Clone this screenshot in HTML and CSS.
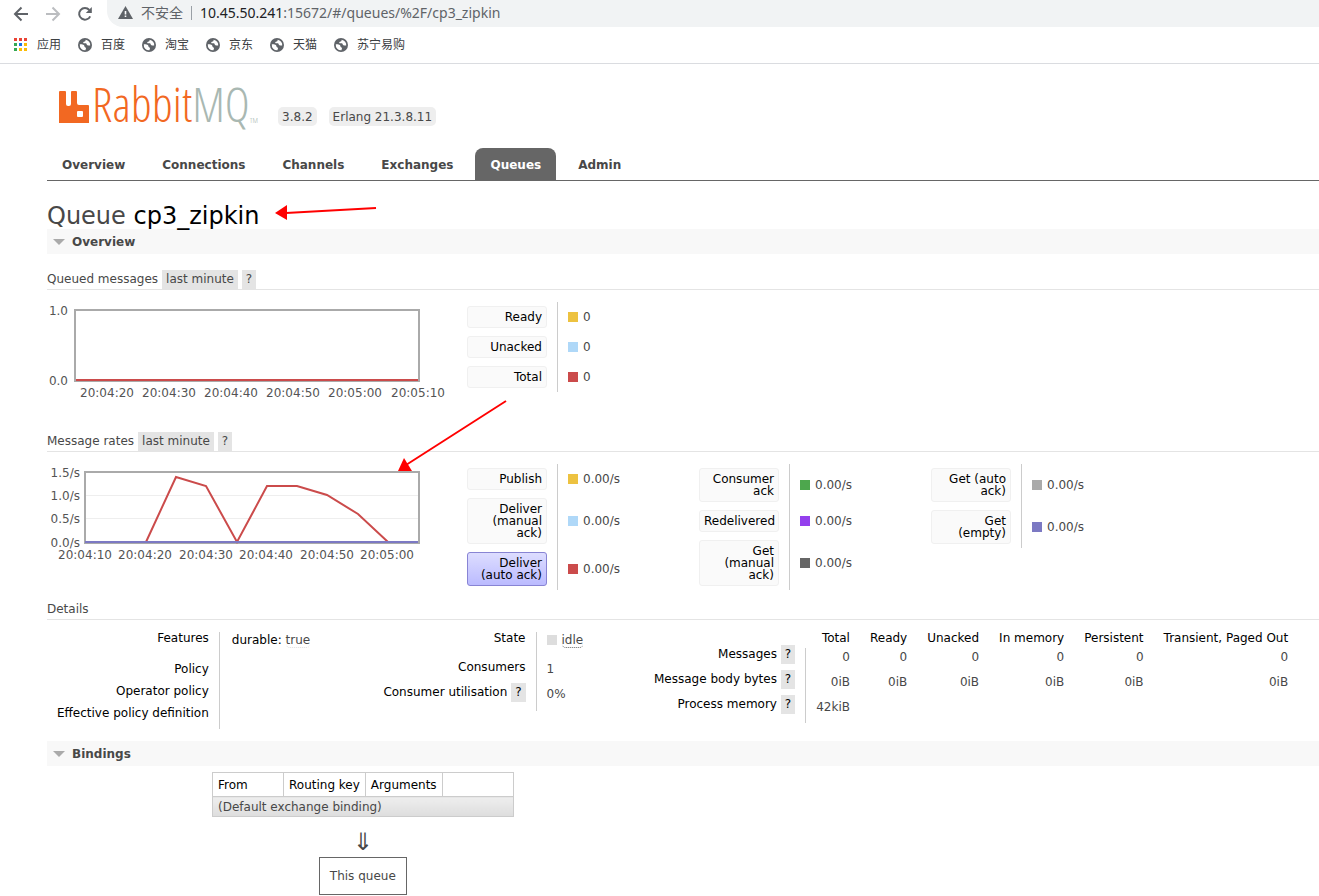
FILE: index.html
```
<!DOCTYPE html>
<html lang="en">
<head>
  <meta charset="utf-8">
  <meta name="viewport" content="width=device-width">
  <title>RabbitMQ Management</title>
  <link rel="stylesheet" href="styles.css">
</head>
<body>
  <svg class="defs" width="0" height="0">
    <symbol id="globe" viewBox="0 0 14 14">
      <circle cx="7" cy="7" r="7" fill="#5f6368"/>
      <path d="M7.600 1.700C7.800 3 7 3.600 6 3.800 5 4 5 4.800 5.600 5.200 6.400 5.600 7.600 5 8.300 5.600 9 6.200 8.600 7 9.300 7.300 10.300 7.600 11.300 7.200 12.200 7.600A5.300 5.300 0 0 0 7.600 1.700z" fill="#fff"/>
      <path d="M1.800 6.300C3.200 6.100 5 6.300 5.800 7.100 6.600 7.800 6.200 8.800 7 9.200 7.900 9.600 8.300 10.200 7.800 11 7.500 11.500 7.600 12 7.500 12.300A5.300 5.300 0 0 1 1.800 6.300z" fill="#fff"/>
    </symbol>
  </svg>

  <div class="browser">
    <div class="toolbar">
      <button class="nav-btn" aria-label="Back">
        <svg width="16" height="16" viewBox="0 0 16 16" fill="none" stroke="#5f6368" stroke-width="2"><path d="M15 8H2M8.500 1.500L2 8l6.500 6.500"/></svg>
      </button>
      <button class="nav-btn" aria-label="Forward">
        <svg width="16" height="16" viewBox="0 0 16 16" fill="none" stroke="#bbbdc0" stroke-width="2"><path d="M1 8h13M7.500 1.500L14 8l-6.500 6.500"/></svg>
      </button>
      <button class="nav-btn" aria-label="Reload">
        <svg width="16" height="16" viewBox="0 0 16 16"><path d="M13.200 10.300A5.800 5.800 0 1 1 12.300 4" fill="none" stroke="#5f6368" stroke-width="2"/><path d="M14.800 1v6H8.800z" fill="#5f6368"/></svg>
      </button>
      <div class="omnibox">
        <svg width="15" height="13" viewBox="0 0 15 13"><path d="M7.500 0L15 13H0z" fill="#5f6368"/><path d="M6.700 5h1.600v3.500H6.700zM6.700 9.500h1.600v1.600H6.700z" fill="#fff"/></svg>
        <span class="insecure">不安全</span>
        <label for="url">10.45.50.241</label>
        <input id="url" type="text" value=":15672/#/queues/%2F/cp3_zipkin">
      </div>
    </div>
    <div class="bookmarks">
      <a href="#">
        <svg width="14" height="14" viewBox="0 0 14 14"><path d="M0 0h3v3H0zM5 0h3v3H5zM10 0h3v3h-3z" fill="#ea4335"/><path d="M0 5h3v3H0zM0 10h3v3H0z" fill="#34a853"/><path d="M5 5h3v3H5z" fill="#1a73e8"/><path d="M10 5h3v3h-3zM5 10h3v3H5zM10 10h3v3h-3z" fill="#fbbc04"/></svg>
        应用
      </a>
      <a href="#"><svg width="14" height="14"><use href="#globe"/></svg>百度</a>
      <a href="#"><svg width="14" height="14"><use href="#globe"/></svg>淘宝</a>
      <a href="#"><svg width="14" height="14"><use href="#globe"/></svg>京东</a>
      <a href="#"><svg width="14" height="14"><use href="#globe"/></svg>天猫</a>
      <a href="#"><svg width="14" height="14"><use href="#globe"/></svg>苏宁易购</a>
    </div>
  </div>

  <div class="page">
    <header>
      <a class="logo" href="#">
        <svg width="30" height="34" viewBox="0 0 30 34"><path d="M1 1h5q1 0 1 1v12q0 2 2 2h1q2 0 2-2V2q0-1 1-1h4q1 0 1 1v11q0 2 2 2h9q1 0 1 1v17H0V2q0-1 1-1zM19 21q-1 0-1 1v4q0 1 1 1h4q1 0 1-1v-4q0-1-1-1z" fill="#f26822" fill-rule="evenodd"/></svg>
        <span class="rabbit">Rabbit</span><span class="mq">MQ</span><span class="tm">TM</span>
      </a>
      <span class="version">3.8.2</span>
      <span class="version">Erlang 21.3.8.11</span>
    </header>

    <nav class="tabs">
      <a href="#">Overview</a>
      <a href="#">Connections</a>
      <a href="#">Channels</a>
      <a href="#">Exchanges</a>
      <a href="#" class="selected">Queues</a>
      <a href="#">Admin</a>
    </nav>

    <main>
      <h1>Queue <b>cp3_zipkin</b></h1>
      <h2>Overview</h2>

      <h3>Queued messages <button class="chip">last minute</button> <button class="chip help">?</button></h3>
      <div class="box">
        <svg class="chart" width="410" height="104">
          <rect x="28" y="8" width="344" height="71" fill="#fff" stroke="#aaa" stroke-width="2"/>
          <path d="M29 78H371" stroke="#cb4b4b" stroke-width="2"/>
          <g text-anchor="end"><text x="21" y="13">1.0</text><text x="21" y="83">0.0</text></g>
          <g text-anchor="middle">
            <text x="60" y="95">20:04:20</text><text x="122" y="95">20:04:30</text><text x="184" y="95">20:04:40</text>
            <text x="246" y="95">20:04:50</text><text x="308" y="95">20:05:00</text><text x="371" y="95">20:05:10</text>
          </g>
        </svg>
        <table class="legend">
          <tr><th><button>Ready</button></th><td><i class="yellow"></i>0</td></tr>
          <tr><th><button>Unacked</button></th><td><i class="blue"></i>0</td></tr>
          <tr><th><button>Total</button></th><td><i class="red"></i>0</td></tr>
        </table>
      </div>

      <h3>Message rates <button class="chip">last minute</button> <button class="chip help">?</button></h3>
      <div class="box">
        <svg class="chart" width="410" height="104">
          <rect x="38" y="8" width="334" height="71" fill="#fff" stroke="#aaa" stroke-width="2"/>
          <path d="M39 31.500H371M39 54.500H371" stroke="#eee"/>
          <path d="M99 78L129 13L159 22L190 78L220 22H250L280 31L311 50L341 78" fill="none" stroke="#cb4b4b" stroke-width="2"/>
          <path d="M38 78H371" stroke="#7c79c3" stroke-width="2"/>
          <g text-anchor="end"><text x="33" y="13">1.5/s</text><text x="33" y="36">1.0/s</text><text x="33" y="59">0.5/s</text><text x="33" y="83">0.0/s</text></g>
          <g text-anchor="middle">
            <text x="38" y="95">20:04:10</text><text x="98" y="95">20:04:20</text><text x="159" y="95">20:04:30</text>
            <text x="219" y="95">20:04:40</text><text x="280" y="95">20:04:50</text><text x="340" y="95">20:05:00</text>
          </g>
        </svg>
        <table class="legend">
          <tr><th><button>Publish</button></th><td><i class="yellow"></i>0.00/s</td></tr>
          <tr><th><button>Deliver<br>(manual<br>ack)</button></th><td><i class="blue"></i>0.00/s</td></tr>
          <tr><th><button class="on">Deliver<br>(auto ack)</button></th><td><i class="red"></i>0.00/s</td></tr>
        </table>
        <table class="legend">
          <tr><th><button>Consumer<br>ack</button></th><td><i class="green"></i>0.00/s</td></tr>
          <tr><th><button>Redelivered</button></th><td><i class="purple"></i>0.00/s</td></tr>
          <tr><th><button>Get<br>(manual<br>ack)</button></th><td><i class="dark"></i>0.00/s</td></tr>
        </table>
        <table class="legend">
          <tr><th><button>Get (auto<br>ack)</button></th><td><i class="grey"></i>0.00/s</td></tr>
          <tr><th><button>Get<br>(empty)</button></th><td><i class="violet"></i>0.00/s</td></tr>
        </table>
      </div>

      <h3>Details</h3>
      <div class="details">
        <table class="facts policy">
          <tr class="first"><th>Features</th><td><span class="key">durable:</span> <abbr class="soft">true</abbr></td></tr>
          <tr><th>Policy</th><td></td></tr>
          <tr><th>Operator policy</th><td></td></tr>
          <tr><th>Effective policy definition</th><td></td></tr>
        </table>
        <table class="facts state">
          <tr class="first"><th>State</th><td><i class="idle"></i><abbr>idle</abbr></td></tr>
          <tr><th>Consumers</th><td>1</td></tr>
          <tr><th>Consumer utilisation <button class="chip help">?</button></th><td>0%</td></tr>
        </table>
        <table class="facts counts">
          <tr class="head"><td></td><th>Total</th><th>Ready</th><th>Unacked</th><th>In memory</th><th>Persistent</th><th>Transient, Paged Out</th></tr>
          <tr><th>Messages <button class="chip help">?</button></th><td>0</td><td>0</td><td>0</td><td>0</td><td>0</td><td>0</td></tr>
          <tr><th>Message body bytes <button class="chip help">?</button></th><td>0iB</td><td>0iB</td><td>0iB</td><td>0iB</td><td>0iB</td><td>0iB</td></tr>
          <tr><th>Process memory <button class="chip help">?</button></th><td>42kiB</td></tr>
        </table>
      </div>

      <h2>Bindings</h2>
      <div class="bindings">
        <table class="list">
          <thead><tr><th>From</th><th>Routing key</th><th>Arguments</th><th></th></tr></thead>
          <tbody><tr><td colspan="4">(Default exchange binding)</td></tr></tbody>
        </table>
        <span class="down">⇓</span>
        <span class="queue">This queue</span>
      </div>
    </main>

    <svg class="mark mark-name" width="104" height="20" viewBox="0 0 104 20"><path d="M12 9L102 4" stroke="#f00" stroke-width="2"/><path d="M1 9L13 1V16z" fill="#f00"/></svg>
    <svg class="mark mark-chart" width="112" height="76" viewBox="0 0 112 76"><path d="M9 66L109 2" stroke="#f00" stroke-width="2"/><path d="M1 72L7 59L15 72z" fill="#f00"/></svg>
  </div>
</body>
</html>
```
FILE: styles.css
```
* {
  box-sizing: border-box;
}

body {
  margin: 0;
  background: #fff;
  color: #484848;
  font: 12px/14px Verdana, "DejaVu Sans", "Noto Sans CJK SC", sans-serif;
  overflow-x: hidden;
}

button, input {
  font: inherit;
  color: inherit;
  border: 0;
  padding: 0;
  background: none;
}

a {
  color: inherit;
  text-decoration: none;
}

.defs {
  display: block;
}

/* browser chrome */
.browser {
  border-bottom: 1px solid #dadce0;
  font-family: "Noto Sans", "Noto Sans CJK SC", sans-serif;
}

.toolbar {
  display: flex;
  height: 27px;
  align-items: center;
  gap: 16px;
  padding-left: 13px;
}

.nav-btn {
  display: flex;
}

.omnibox {
  flex: 1;
  display: flex;
  align-items: center;
  height: 27px;
  margin-left: -2px;
  padding: 0 0 2px 11px;
  background: #f1f3f4;
  border-radius: 0 0 0 16px;
  color: #5f6368;
  font-size: 14px;
}

.insecure {
  margin: 0 8px;
  padding-right: 8px;
  border-right: 1px solid #9aa0a6;
}

.omnibox label {
  color: #202124;
}

.omnibox input {
  flex: 1;
}

.bookmarks {
  display: flex;
  gap: 17px;
  height: 36px;
  align-items: center;
  padding-left: 14px;
}

.bookmarks a {
  display: flex;
  align-items: center;
  gap: 9px;
  color: #3c4043;
}

/* management page */
.page {
  position: relative;
  padding-left: 47px;
}

header {
  display: flex;
  align-items: flex-end;
  gap: 12px;
  height: 62px;
  padding-left: 12px;
}

.logo {
  display: flex;
  align-items: flex-end;
  margin-right: 8px;
  font: 300 48px/44px "Open Sans Condensed Light", "Roboto Condensed Light", "Roboto Condensed", Roboto, sans-serif;
}

.logo svg {
  margin: 0 3px 2px 0;
}

.rabbit {
  color: #f26822;
}

.mq {
  color: #a9b8b2;
}

.tm {
  color: #a9b8b2;
  font-size: 8px;
  line-height: 12px;
}

.version {
  padding: 3px 4px 2px;
  background: #eee;
  border-radius: 5px;
}

.tabs {
  display: flex;
  gap: 7px;
  margin-top: 22px;
  border-bottom: 1px solid #666;
  font-weight: bold;
}

.tabs a {
  padding: 10px 15px 8px;
}

.tabs .selected {
  background: #666;
  color: #fff;
  border-radius: 8px 8px 0 0;
}

h1 {
  margin: 22px 0 0;
  font-size: 24px;
  line-height: 26px;
  font-weight: normal;
}

h1 b {
  color: #000;
  font-weight: normal;
}

h2 {
  display: flex;
  align-items: center;
  gap: 7px;
  height: 25px;
  margin: 0 0 6px;
  padding-left: 6px;
  background: #f8f8f8;
  font-size: 12px;
}

h2::before {
  content: "";
  border: 6px solid transparent;
  border-top-color: #aaa;
  border-bottom: 0;
}

h3 {
  display: flex;
  align-items: center;
  gap: 4px;
  margin: 10px 0 12px;
  border-bottom: 1px solid #e4e4e4;
  font-size: 12px;
  font-weight: normal;
  line-height: 19px;
}

h2 + h3 {
  margin-top: 16px;
}

.chip {
  height: 19px;
  padding: 0 4px;
  background: #e4e4e4;
}

.box {
  display: flex;
  align-items: flex-start;
  min-height: 120px;
}

.chart {
  flex: none;
  fill: #545454;
}

table {
  border-collapse: collapse;
}

th {
  color: #000;
  font-weight: normal;
  text-align: right;
}

.legend {
  width: 232px;
}

.legend th {
  width: 100px;
  padding: 4px 10px;
}

.legend td {
  padding: 0 10px;
  border-left: 1px solid #ccc;
}

.legend button {
  display: block;
  width: 80px;
  padding: 4px;
  border: 1px solid #f0f0f0;
  border-radius: 3px;
  background: #fafafa;
  color: #000;
  line-height: 12px;
  text-align: right;
}

.legend .on {
  border-color: #8884d4;
  background: linear-gradient(#ddf, #bbf);
}

i {
  display: inline-block;
  width: 10px;
  height: 10px;
  margin-right: 5px;
  vertical-align: -1px;
}

.yellow { background: #edc240; }
.blue { background: #afd8f8; }
.red { background: #cb4b4b; }
.green { background: #4da74d; }
.purple { background: #9440ed; }
.dark { background: #666; }
.grey { background: #aaa; }
.violet { background: #7c79c3; }
.idle { background: #ddd; }

.details {
  display: flex;
  align-items: flex-start;
  height: 109px;
}

.facts {
  line-height: 12px;
}

.facts th, .facts td {
  padding: 0 10px;
  vertical-align: top;
  white-space: nowrap;
}

.facts td {
  padding-top: 2px;
  border-left: 1px solid #ccc;
}

.facts .chip {
  margin: -4px 0;
}

abbr {
  border-bottom: 1px dotted #666;
  border-radius: 4px;
}

.soft {
  border-color: #ddd;
}

.key {
  color: #000;
  padding-left: 2px;
}

.policy {
  width: 326px;
}

.policy th {
  width: 171px;
}

.policy tr {
  height: 22px;
}

.policy .first {
  height: 31px;
}

.state {
  width: 271px;
}

.state th {
  width: 163px;
}

.state tr {
  height: 25px;
}

.state .first {
  height: 29px;
}

.counts tr {
  height: 25px;
}

.counts .head {
  height: 16px;
}

.counts td {
  border: 0;
  padding-top: 3px;
  text-align: right;
}

.counts th + td {
  border-left: 1px solid #ccc;
}

.bindings {
  display: inline-flex;
  flex-direction: column;
  align-items: center;
  margin-left: 165px;
}

.list th, .list td {
  border: 1px solid #ccc;
  padding: 5px 5px 4px;
  text-align: left;
}

.list td {
  padding: 3px 5px 2px;
  background: linear-gradient(#eee, #ddd);
}

.list th:first-child, .list th:last-child {
  width: 71px;
}

.down {
  margin: 12px 0 1px;
  font-size: 24px;
  line-height: 27px;
}

.queue {
  padding: 11px 10px;
  border: 1px solid #666;
}

/* hand-drawn pointers over the page */
.mark {
  position: absolute;
}

.mark-name {
  left: 274px;
  top: 140px;
}

.mark-chart {
  left: 397px;
  top: 335px;
}
```
